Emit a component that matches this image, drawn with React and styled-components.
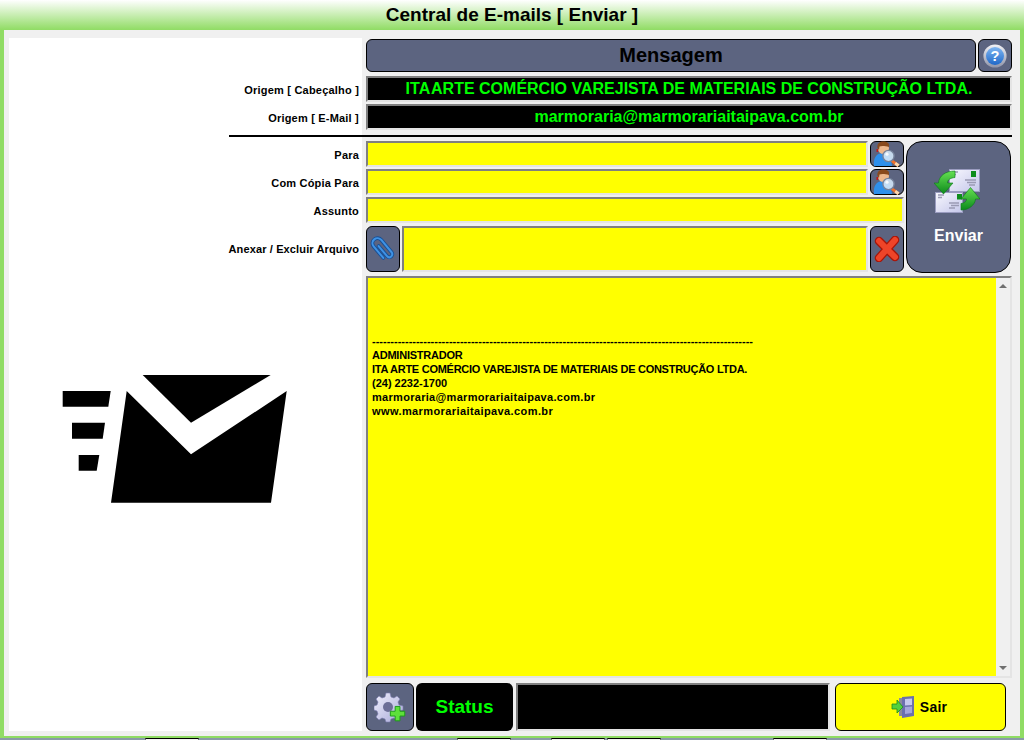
import React from "react";
import styled, { createGlobalStyle } from "styled-components";

const GlobalStyle = createGlobalStyle`
  html, body {
    margin: 0;
    padding: 0;
    background: #90dc64;
    font-family: "Liberation Sans", Arial, sans-serif;
    overflow: hidden;
  }
  * {
    box-sizing: border-box;
  }
`;

const FOOTER_TABS = [
  { id: "a", gap: 145 },
  { id: "b", gap: 258 },
  { id: "c", gap: 40 },
  { id: "d", gap: 2 },
  { id: "e", gap: 112 },
];

const SIGNATURE_LINES = [
  { text: "-".repeat(104), spacing: 0 },
  { text: "ADMINISTRADOR", spacing: -0.23 },
  { text: "ITA ARTE COMÉRCIO VAREJISTA DE MATERIAIS DE CONSTRUÇÃO LTDA.", spacing: -0.27 },
  { text: "(24) 2232-1700", spacing: 0 },
  { text: "marmoraria@marmorariaitaipava.com.br", spacing: 0.3 },
  { text: "www.marmorariaitaipava.com.br", spacing: 0.4 },
];

function LogoMail() {
  return (
    <svg width="226" height="129" viewBox="62 375 226 129">
      <polygon points="142.7,375 270.7,375 191,422.7" fill="#000" />
      <polygon points="126.7,391 191,454.3 286.7,391 271,502.7 111,502.7" fill="#000" />
      <polygon points="62.7,391 110.7,391 108.3,406.7 62.7,406.7" fill="#000" />
      <polygon points="72,422.7 105,422.7 102.7,438.7 72,438.7" fill="#000" />
      <polygon points="78.7,455 99.3,455 96.7,470.7 78.7,470.7" fill="#000" />
    </svg>
  );
}

function HelpIcon() {
  return (
    <svg width="24" height="24" viewBox="0 0 28 28">
      <defs>
        <linearGradient id="helpRing" x1="0" y1="0" x2="0" y2="1">
          <stop offset="0" stopColor="#f2f2f6" />
          <stop offset="1" stopColor="#8f94a8" />
        </linearGradient>
        <linearGradient id="helpFill" x1="0" y1="0" x2="0" y2="1">
          <stop offset="0" stopColor="#7fb6f2" />
          <stop offset="1" stopColor="#1f68c8" />
        </linearGradient>
      </defs>
      <circle cx="14" cy="14" r="13.5" fill="url(#helpRing)" />
      <circle cx="14" cy="14" r="10.5" fill="url(#helpFill)" />
      <text x="14" y="20" textAnchor="middle" fontFamily="Liberation Sans" fontWeight="700" fontSize="17" fill="#fff">?</text>
    </svg>
  );
}

function LookupIcon() {
  return (
    <svg width="28" height="26" viewBox="0 0 28 26">
      <path d="M1 25 C0 16 4 12 10 12 C15 12 18 16 19 25 Z" fill="#2e90ec" />
      <circle cx="10.5" cy="7.5" r="5.5" fill="#eeb88c" />
      <path d="M4.5 7 C3.5 1 8.5 0 11.5 0.5 C15.5 1 16.5 3 16 6 C12.5 5 8.5 4.5 6.5 5.5 L6 9 Z" fill="#8a4a1c" />
      <rect x="3.5" y="8" width="1.6" height="3" fill="#c01818" />
      <path d="M19.5 18.5 L26.5 23.5 L24.5 26 L17.5 20.5 Z" fill="#f0722a" />
      <path d="M23 21 L26.5 23.5 L24.5 26 L21.5 23.5 Z" fill="#f8d8b0" />
      <circle cx="15.5" cy="15" r="5.6" fill="#cfe4f6" fillOpacity="0.92" stroke="#78849c" strokeWidth="1.4" />
      <circle cx="14" cy="13.2" r="1.6" fill="#fff" fillOpacity="0.85" />
    </svg>
  );
}

function SendMailIcon() {
  return (
    <svg width="46" height="46" viewBox="0 0 46 46">
      <defs>
        <linearGradient id="mailPaper" x1="0" y1="0" x2="1" y2="1">
          <stop offset="0" stopColor="#f8f8fe" />
          <stop offset="1" stopColor="#c4c6ea" />
        </linearGradient>
        <linearGradient id="mailArrow" x1="0" y1="0" x2="0" y2="1">
          <stop offset="0" stopColor="#66e052" />
          <stop offset="1" stopColor="#0c8a1c" />
        </linearGradient>
      </defs>
      <rect x="15.5" y="1.5" width="30" height="22" fill="url(#mailPaper)" stroke="#9a9cc0" />
      <rect x="37" y="3" width="5" height="6" fill="#0d8d1c" />
      <path d="M18 4h6M18 6.5h4M31 12h11M33 14.5h9M35 17h6" stroke="#9a9ab4" strokeWidth="1.4" />
      <rect x="1.5" y="24.5" width="27" height="20" fill="url(#mailPaper)" stroke="#9a9cc0" />
      <rect x="23" y="26" width="5" height="5.5" fill="#0d8d1c" />
      <path d="M4 27h6M4 29.5h4M15 35h10M17 37.5h8M15 40h6" stroke="#9a9ab4" strokeWidth="1.4" />
      <path d="M21 3 C11 3 5 8 4.5 15 L0 15 L9.5 26 L19 15 L13.5 15 C13.5 12 16 10 21 9.5 Z" fill="url(#mailArrow)" stroke="#0a7a18" strokeWidth="0.6" />
      <path d="M27 42 C35 42 41 37 41.5 31 L46 31 L36.5 19.5 L27 31 L32.5 31 C32.5 33 31 35 27 35.5 Z" fill="url(#mailArrow)" stroke="#0a7a18" strokeWidth="0.6" />
    </svg>
  );
}

function ClipIcon() {
  const clip = "M-2.5 -5 V8 a3 3 0 0 0 6 0 V-8 a5 5 0 0 0 -10 0 V7";
  return (
    <svg width="26" height="26" viewBox="-13 -13 26 26">
      <g transform="rotate(-40) translate(1 0)">
        <path d={clip} fill="none" stroke="#174f96" strokeWidth="3.8" strokeLinecap="round" />
        <path d={clip} fill="none" stroke="#3f92e4" strokeWidth="2" strokeLinecap="round" />
      </g>
    </svg>
  );
}

function DeleteIcon() {
  return (
    <svg width="26" height="26" viewBox="0 0 26 26">
      <path d="M5 5 L21 21 M21 4 L5 22" stroke="#a81408" strokeWidth="8.6" strokeLinecap="round" />
      <path d="M5 5 L21 21 M21 4 L5 22" stroke="#ee4428" strokeWidth="6" strokeLinecap="round" />
    </svg>
  );
}

function GearAddIcon() {
  return (
    <svg width="32" height="32" viewBox="0 0 32 32">
      <defs>
        <linearGradient id="gearFill" x1="0" y1="0" x2="1" y2="1">
          <stop offset="0" stopColor="#f0f0fc" />
          <stop offset="1" stopColor="#a8a8d8" />
        </linearGradient>
      </defs>
      <path
        d="M12 2 H16 L17 6 L20 7 L23 5 L26 8 L24 11 L25 14 L29 15 V19 L25 20 L24 23 L26 26 L23 29 L20 27 L17 28 L16 31 H12 L11 28 L8 27 L5 29 L2 26 L4 23 L3 20 L0 19 V15 L3 14 L4 11 L2 8 L5 5 L8 7 L11 6 Z"
        fill="url(#gearFill)"
        stroke="#7c7cb0"
        strokeWidth="0.6"
      />
      <circle cx="14" cy="16" r="5" fill="#6c6e96" />
      <path d="M21 14 h5 v5 h5 v5 h-5 v5 h-5 v-5 h-5 v-5 h5 Z" fill="#5ee03a" stroke="#1c9a18" strokeWidth="1" transform="translate(1 2) scale(0.96)" />
    </svg>
  );
}

function ExitIcon() {
  return (
    <svg width="24" height="24" viewBox="0 0 24 24">
      <path d="M8 3 H12 V21 H8 Z" fill="#8a8a9c" />
      <path d="M11 2 L23 1 V21 L11 23 Z" fill="#6c6fae" />
      <path d="M14 4 L21 3.4 V10 L14 10.6 Z" fill="#c6c8ee" />
      <path d="M14 12 L21 11.4 V18 L14 19 Z" fill="#a4a6dc" />
      <path d="M1 9 H6 V5 L12 12 L6 18 V14 H1 Z" fill="#52d23c" stroke="#1f8c1a" strokeWidth="0.8" />
    </svg>
  );
}

export default function App() {
  return (
    <>
      <GlobalStyle />
      <Page>
        <TitleBar>Central de E-mails [ Enviar ]</TitleBar>
        <Panel>
          <Layout>
            <WhiteBack />

            <MessageRow>
              <HeadingBar>Mensagem</HeadingBar>
              <IconButton $width={34}>
                <HelpIcon />
              </IconButton>
            </MessageRow>

            <Label $row={2}>Origem [ Cabeçalho ]</Label>
            <OriginField $row={2}>
              <span>
                <TightWord>ITA </TightWord>ARTE COMÉRCIO VAREJISTA DE MATERIAIS DE CONSTRUÇÃO LTDA.
              </span>
            </OriginField>

            <Label $row={3}>Origem [ E-Mail ]</Label>
            <OriginField $row={3}>marmoraria@marmorariaitaipava.com.br</OriginField>

            <Divider />

            <Label $row={5}>Para</Label>
            <Label $row={6}>Com Cópia Para</Label>
            <Label $row={7}>Assunto</Label>
            <AttachLabel>Anexar / Excluir Arquivo</AttachLabel>

            <FormBlock>
              <FormRows>
                <InputRow>
                  <YellowField />
                  <IconButton $width={34}>
                    <LookupIcon />
                  </IconButton>
                </InputRow>
                <InputRow>
                  <YellowField />
                  <IconButton $width={34}>
                    <LookupIcon />
                  </IconButton>
                </InputRow>
                <InputRow>
                  <YellowField />
                </InputRow>
                <AttachRow>
                  <IconButton $width={34}>
                    <ClipIcon />
                  </IconButton>
                  <YellowField />
                  <IconButton $width={34}>
                    <DeleteIcon />
                  </IconButton>
                </AttachRow>
              </FormRows>
              <SendButton>
                <SendIconSlot>
                  <SendMailIcon />
                </SendIconSlot>
                <span>Enviar</span>
              </SendButton>
            </FormBlock>

            <LogoCell>
              <LogoMail />
            </LogoCell>

            <MessageBox>
              <MessageText>
                {SIGNATURE_LINES.map((line) => (
                  <SignatureLine key={line.text} $spacing={line.spacing}>
                    {line.text}
                  </SignatureLine>
                ))}
              </MessageText>
              <ScrollTrack>
                <ScrollArrow $up />
                <ScrollArrow />
              </ScrollTrack>
            </MessageBox>

            <BottomRow>
              <IconButton $width={48}>
                <GearAddIcon />
              </IconButton>
              <StatusBadge>Status</StatusBadge>
              <StatusOutput />
              <ExitButton>
                <ExitIcon />
                <span>Sair</span>
              </ExitButton>
            </BottomRow>
          </Layout>
        </Panel>
        <FooterStrip>
          {FOOTER_TABS.map((tab) => (
            <FooterTab key={tab.id} $gap={tab.gap} />
          ))}
        </FooterStrip>
      </Page>
    </>
  );
}

const Page = styled.div`
  width: 1024px;
  height: 740px;
  display: flex;
  flex-direction: column;
  overflow: hidden;
`;

const TitleBar = styled.div`
  height: 30px;
  flex: none;
  display: flex;
  align-items: center;
  justify-content: center;
  background: linear-gradient(to bottom, #ffffff 0%, #90dc64 100%);
  color: #000;
  font-size: 19px;
  font-weight: 700;
`;

const Panel = styled.div`
  height: 706px;
  flex: none;
  margin: 0 4px;
  padding: 8px 8px 5px 5px;
  background: #f0f0f0;
`;

const Layout = styled.div`
  display: grid;
  grid-template-columns: 353px 4px 646px;
  grid-template-rows: 34px 30px 28px 9px 28px 28px 28px 50px 405px 53px;
  height: 693px;
`;

const WhiteBack = styled.div`
  grid-column: 1;
  grid-row: 1 / -1;
  background: #fff;
`;

const MessageRow = styled.div`
  grid-column: 3;
  grid-row: 1;
  align-self: end;
  height: 33px;
  display: flex;
  gap: 2px;
`;

const HeadingBar = styled.div`
  flex: 1;
  display: flex;
  align-items: center;
  justify-content: center;
  background: #5c6480;
  border: 1px solid #000;
  border-radius: 6px;
  color: #000;
  font-size: 20px;
  font-weight: 700;
`;

const IconButton = styled.button`
  flex: none;
  width: ${(p) => p.$width}px;
  padding: 0;
  display: flex;
  align-items: center;
  justify-content: center;
  background: #5c6480;
  border: 1px solid #000;
  border-radius: 6px;
`;

const Label = styled.div`
  grid-column: 1;
  grid-row: ${(p) => p.$row};
  align-self: end;
  padding: 0 3px 5px 0;
  text-align: right;
  color: #000;
  font-size: 11px;
  font-weight: 700;
  letter-spacing: 0.2px;
  line-height: 14px;
`;

const AttachLabel = styled(Label).attrs({ $row: 8 })`
  align-self: center;
  padding: 2px 3px 0 0;
  letter-spacing: 0.13px;
`;

const bevel = `
  border-style: solid;
  border-width: 2px;
  border-color: #808080 #e4e4e4 #e4e4e4 #808080;
`;

const OriginField = styled.div`
  grid-column: 3;
  grid-row: ${(p) => p.$row};
  align-self: end;
  height: 26px;
  ${bevel}
  background: #000;
  color: #00ff00;
  font-size: 16px;
  font-weight: 700;
  display: flex;
  align-items: center;
  justify-content: center;
`;

const TightWord = styled.span`
  word-spacing: -3px;
`;

const Divider = styled.div`
  grid-column: 1 / -1;
  grid-row: 4;
  height: 2px;
  margin: 5px 0 0 220px;
  background: #000;
`;

const FormBlock = styled.div`
  grid-column: 3;
  grid-row: 5 / 9;
  padding-top: 2px;
  display: flex;
  gap: 2px;
`;

const FormRows = styled.div`
  width: 538px;
  flex: none;
  display: grid;
  grid-template-rows: 26px 26px 26px 47px;
  row-gap: 2px;
`;

const InputRow = styled.div`
  display: flex;
  gap: 2px;
`;

const AttachRow = styled.div`
  display: flex;
  gap: 2px;
  margin-top: 1px;
`;

const YellowField = styled.div`
  flex: 1;
  ${bevel}
  background: #ffff00;
`;

const SendButton = styled.button`
  width: 105px;
  flex: none;
  padding: 26px 0 0;
  display: flex;
  flex-direction: column;
  align-items: center;
  gap: 13px;
  background: #5c6480;
  border: 1px solid #000;
  border-radius: 16px;
  color: #fff;
  font-family: inherit;
  font-size: 16px;
  font-weight: 700;
`;

const SendIconSlot = styled.div`
  display: flex;
  padding-right: 4px;
`;

const LogoCell = styled.div`
  grid-column: 1;
  grid-row: 9;
  padding: 102px 0 0 53px;
`;

const MessageBox = styled.div`
  grid-column: 3;
  grid-row: 9;
  align-self: end;
  height: 402px;
  ${bevel}
  display: flex;
`;

const MessageText = styled.div`
  flex: 1;
  padding: 56px 0 0 4px;
  background: #ffff00;
  color: #000;
  font-size: 11px;
  font-weight: 700;
  line-height: 14px;
  white-space: nowrap;
  overflow: hidden;
`;

const SignatureLine = styled.div`
  letter-spacing: ${(p) => p.$spacing}px;
`;

const ScrollTrack = styled.div`
  width: 14px;
  flex: none;
  background: #f0f0f0;
  display: flex;
  flex-direction: column;
  justify-content: space-between;
  padding: 6px 0;
`;

const ScrollArrow = styled.div`
  width: 0;
  height: 0;
  margin: 0 auto;
  border-left: 4px solid transparent;
  border-right: 4px solid transparent;
  ${(p) => (p.$up ? "border-bottom: 4px solid #707070;" : "border-top: 4px solid #707070;")}
`;

const BottomRow = styled.div`
  grid-column: 3;
  grid-row: 10;
  align-self: end;
  height: 48px;
  display: flex;
`;

const StatusBadge = styled.div`
  width: 97px;
  margin-left: 2px;
  flex: none;
  display: flex;
  align-items: center;
  justify-content: center;
  background: #000;
  border-radius: 6px;
  color: #00ff00;
  font-size: 19px;
  font-weight: 700;
`;

const StatusOutput = styled.div`
  width: 314px;
  margin-left: 3px;
  flex: none;
  ${bevel}
  background: #000;
`;

const ExitButton = styled.button`
  width: 171px;
  margin-left: 5px;
  flex: none;
  padding: 0 3px 0 0;
  display: flex;
  align-items: center;
  justify-content: center;
  gap: 5px;
  background: #ffff00;
  border: 1px solid #000;
  border-radius: 6px;
  color: #000;
  font-family: inherit;
  font-size: 14px;
  font-weight: 700;
  letter-spacing: 0.2px;
`;

const FooterStrip = styled.div`
  height: 4px;
  flex: none;
  display: flex;
  align-items: flex-end;
  background: linear-gradient(to bottom, #90dc64 0%, #90dc64 50%, #8a9aa8 50%, #8a9aa8 100%);
`;

const FooterTab = styled.div`
  width: 54px;
  height: 2px;
  margin-left: ${(p) => p.$gap}px;
  background: #f4f4f4;
  border-top: 1px solid #000;
  border-left: 1px solid #707070;
  border-right: 1px solid #707070;
`;
